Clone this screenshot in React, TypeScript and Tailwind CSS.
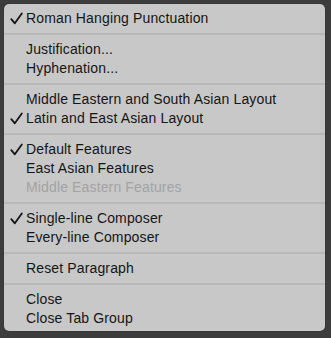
import React from "react";

type Item = { label: string; checked?: boolean; disabled?: boolean };

const groups: Item[][] = [
	[{ label: "Roman Hanging Punctuation", checked: true }],
	[{ label: "Justification..." }, { label: "Hyphenation..." }],
	[
		{ label: "Middle Eastern and South Asian Layout" },
		{ label: "Latin and East Asian Layout", checked: true },
	],
	[
		{ label: "Default Features", checked: true },
		{ label: "East Asian Features" },
		{ label: "Middle Eastern Features", disabled: true },
	],
	[
		{ label: "Single-line Composer", checked: true },
		{ label: "Every-line Composer" },
	],
	[{ label: "Reset Paragraph" }],
	[{ label: "Close" }, { label: "Close Tab Group" }],
];

const Check = () => (
	<svg width="13" height="13" viewBox="0 0 13 13" className="absolute left-[6px] top-[3px]">
		<path d="M1.3 7.2 L4.8 11.3 L11.8 1.4" fill="none" stroke="#151515" strokeWidth="1.8" strokeLinecap="round" strokeLinejoin="round" />
	</svg>
);

const App = () => {
	return (
		<div className="w-[331px] h-[338px] bg-[#3c3c3c] overflow-hidden relative">
			{/* Menu */}
			<div
				className="ml-[4px] mt-[4px] w-[321px] rounded-[5px] bg-[#c8c8c8] pt-[5px] pb-[3px] text-[14px] tracking-[0.14px] shadow-[0_0_1px_rgba(0,0,0,0.6)]"
				style={{ fontFamily: '"Liberation Sans", Arial, sans-serif' }}
			>
				{groups.map((g, gi) => (
					<div key={gi}>
						{gi > 0 && <div className="my-[5px] h-[2px] bg-[#b8b8b8]" />}
						{g.map((it) => (
							<div
								key={it.label}
								className={`relative h-[19px] leading-[19px] pl-[22px] ${
									it.disabled ? "text-[#a3a3a3]" : "text-[#151515]"
								}`}
							>
								{it.checked && <Check />}
								{it.label}
							</div>
						))}
					</div>
				))}
			</div>
		</div>
	);
};

export default App;
